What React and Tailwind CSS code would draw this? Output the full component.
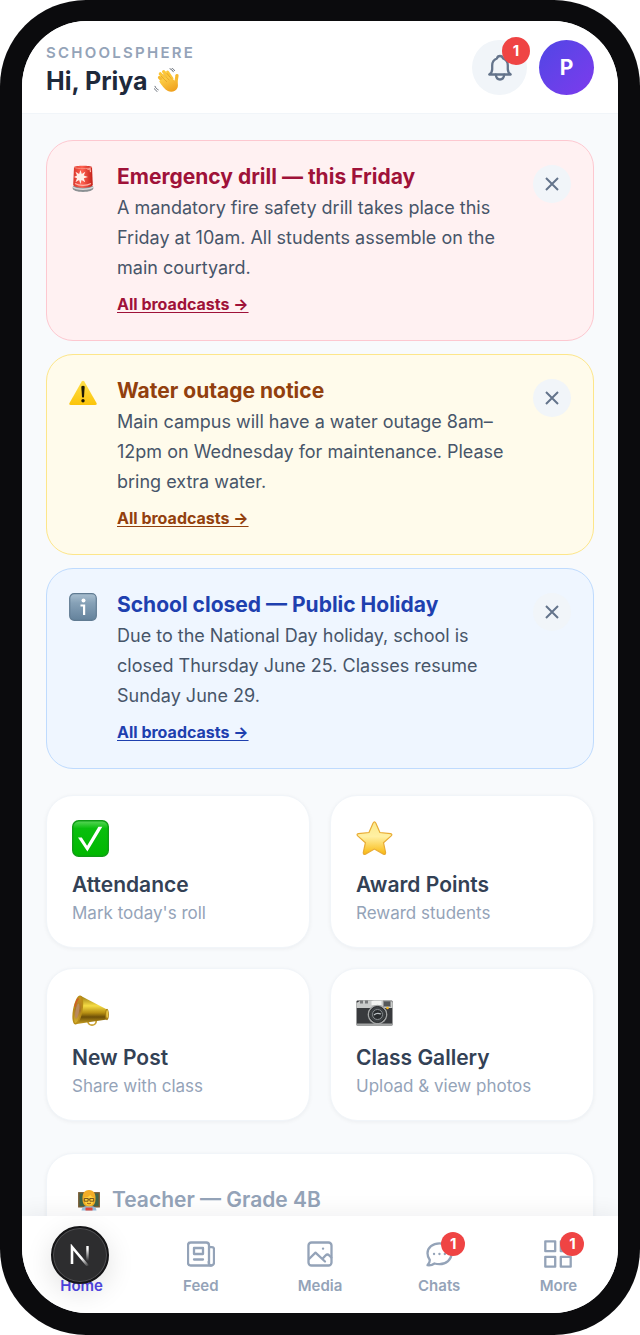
import React, { useState } from 'react'

const broadcasts = [
  {
    id: 'drill',
    title: 'Emergency drill — this Friday',
    body: 'A mandatory fire safety drill takes place this Friday at 10am. All students assemble on the main courtyard.',
    icon: SirenEmoji,
    card: 'bg-[#fff1f2] border-[#fdc8d0]',
    accent: 'text-[#9f1239]'
  },
  {
    id: 'water',
    title: 'Water outage notice',
    body: 'Main campus will have a water outage 8am–12pm on Wednesday for maintenance. Please bring extra water.',
    icon: WarningEmoji,
    card: 'bg-[#fffbeb] border-[#fde68a]',
    accent: 'text-[#92400e]'
  },
  {
    id: 'holiday',
    title: 'School closed — Public Holiday',
    body: 'Due to the National Day holiday, school is closed Thursday June 25. Classes resume Sunday June 29.',
    icon: InfoEmoji,
    card: 'bg-[#eff6ff] border-[#bfdbfe]',
    accent: 'text-[#1e40af]'
  }
]

const actions = [
  { title: 'Attendance', subtitle: "Mark today's roll", icon: CheckEmoji },
  { title: 'Award Points', subtitle: 'Reward students', icon: StarEmoji },
  { title: 'New Post', subtitle: 'Share with class', icon: MegaphoneEmoji },
  { title: 'Class Gallery', subtitle: 'Upload & view photos', icon: CameraEmoji }
]

const tabs = [
  { label: 'Home', icon: HomeIcon, active: true },
  { label: 'Feed', icon: FeedIcon },
  { label: 'Media', icon: MediaIcon },
  { label: 'Chats', icon: ChatIcon, badge: 1 },
  { label: 'More', icon: MoreIcon, badge: 1 }
]

/* Emoji drawings */

function WaveEmoji() {
  return (
    <svg viewBox="0 0 26 26" className="w-[26px] h-[26px]" aria-hidden="true">
      <defs>
        <linearGradient id="wave" x1="0" y1="0" x2="0.6" y2="1">
          <stop offset="0" stopColor="#ffd84f" />
          <stop offset="1" stopColor="#f0a21f" />
        </linearGradient>
      </defs>
      <g strokeLinecap="round" fill="none">
        <path d="M5.5 9.5 12 16" stroke="#f6b92e" strokeWidth="3.2" />
        <path d="M6.3 5.8 13.5 13" stroke="#fbc638" strokeWidth="3.2" />
        <path d="M9.6 3.6 16 11" stroke="#fbc638" strokeWidth="3.2" />
        <path d="M13.6 4 18 10.5" stroke="#fbc638" strokeWidth="3" />
        <path d="M23 7.6 22 14" stroke="#f6b92e" strokeWidth="3.2" />
      </g>
      <path d="M5.2 13.2C7 11.5 15 7.5 17.2 9.2l3.3 3.6 1.4-2.6c1.6 2.2 2.8 6.6 1.6 9.6-1.5 3.8-6.3 5-9.6 3.2-2.9-1.6-6.7-6-8.7-9.8z" fill="url(#wave)" />
      <path d="m7 8.2 6 5.7M9.4 6.2l6 6.1M12.8 5.2l4.5 5.5" stroke="#e09a22" strokeWidth=".7" fill="none" />
      <path d="M16 .8c1.5.6 2.6 1.6 3.3 3M18 .3c1.2.5 1.9 1.2 2.5 2.3M1 18.3c.6 1.6 1.7 2.8 3.2 3.5M.6 20.8c.5 1.2 1.3 2 2.4 2.5" stroke="#555d69" strokeWidth=".9" strokeLinecap="round" fill="none" />
    </svg>
  )
}

function SirenEmoji() {
  return (
    <svg viewBox="0 0 28 28" className="w-7 h-7" aria-hidden="true">
      <defs>
        <linearGradient id="siren" x1="0" x2="1">
          <stop offset="0" stopColor="#d9372c" />
          <stop offset=".45" stopColor="#ff6352" />
          <stop offset="1" stopColor="#c31f18" />
        </linearGradient>
      </defs>
      <path d="M4 21h20l.4 2c0 2.5-4.400 3.900-10.400 3.900S3.600 25.500 3.600 23z" fill="#8b9093" />
      <path d="M4 22c3 2.900 17 2.900 20 0" stroke="#d5d8da" strokeWidth="1.500" fill="none" />
      <path d="M5 2C6.500.200 21.500.200 23 2l.8 18c-2 3.600-17.600 3.600-19.600 0z" fill="url(#siren)" />
      <path d="M5.300 2.400c3 1.600 14.400 1.600 17.400 0" stroke="#f98b7d" fill="none" />
      <path d="m18.500 4.500 2.500-.8.5 3.500M6 18.500c4 2.500 12 2.500 16 0" stroke="#ffb4a8" strokeWidth="1.200" fill="none" />
      <path d="m11.500 5 1.300 4 3.500-2.300-1.500 3.900 4.200 1.300-4.200 1.400 1.400 3.900-3.600-2.200-1.200 4-1.300-4-3.600 2.200 1.500-3.900-3-1.400 3-1.400-1.500-3.800 3.600 2.300z" fill="#fff0e9" />
    </svg>
  )
}

function WarningEmoji() {
  return (
    <svg viewBox="0 0 28 28" className="w-7 h-7" aria-hidden="true">
      <defs>
        <linearGradient id="warn" x1="0" y1="0" x2="0" y2="1">
          <stop offset="0" stopColor="#ffe04a" />
          <stop offset="1" stopColor="#fbc40a" />
        </linearGradient>
      </defs>
      <path d="M12.7 2.6q1.3-1.8 2.6 0L27.5 24q.8 2-1.3 2H1.8q-2.100 0-1.300-2z" fill="url(#warn)" />
      <path d="M12.3 7.500q1.700-1.500 3.400 0l-.7 10.500q-1 1-2 0z" fill="#1d1905" />
      <circle cx="14" cy="21.800" r="1.700" fill="#1d1905" />
    </svg>
  )
}

function InfoEmoji() {
  return (
    <svg viewBox="0 0 28 28" className="w-7 h-7" aria-hidden="true">
      <defs>
        <linearGradient id="info" x1="0" y1="0" x2="0" y2="1">
          <stop offset="0" stopColor="#a9bfd0" />
          <stop offset=".35" stopColor="#86a1b7" />
          <stop offset="1" stopColor="#64829c" />
        </linearGradient>
      </defs>
      <rect x=".7" y=".7" width="26.6" height="26.6" rx="4.5" fill="url(#info)" stroke="#607b92" strokeWidth="1.2" />
      <circle cx="14.5" cy="7.6" r="2" fill="#fff" />
      <path d="M11.500 12.500h3.600V22" stroke="#fff" strokeWidth="2.200" fill="none" />
    </svg>
  )
}

function CheckEmoji() {
  return (
    <svg viewBox="0 0 37 37" className="w-[37px] h-[37px]" aria-hidden="true">
      <defs>
        <linearGradient id="check" x1="0" y1="0" x2="0" y2="1">
          <stop offset="0" stopColor="#5bd65a" />
          <stop offset=".22" stopColor="#09be0d" />
          <stop offset="1" stopColor="#00b800" />
        </linearGradient>
      </defs>
      <rect x=".7" y=".7" width="35.6" height="35.6" rx="6" fill="url(#check)" stroke="#109c16" strokeWidth="1.4" />
      <path d="M6 17.500h3.800l5.300 8.300L26.400 6.700h3.900L15.400 31.500z" fill="#fff" />
    </svg>
  )
}

function StarEmoji() {
  return (
    <svg viewBox="0 0 37 37" className="w-[37px] h-[37px]" aria-hidden="true">
      <defs>
        <linearGradient id="star" x1="0" y1="0" x2="0" y2="1">
          <stop offset="0" stopColor="#fbe98b" />
          <stop offset=".45" stopColor="#fff0a3" />
          <stop offset="1" stopColor="#f9b90f" />
        </linearGradient>
      </defs>
      <path
        d="M17 3.200q1.500-2.600 2.900 0l4 9.300 10.600 1.100q2.300.6.7 2.300l-7.700 6.800 2.100 9.900q.1 2.500-2.200 1.500l-9-5-8.900 5q-2.300 1-2.200-1.500l2.100-9.900-7.700-6.800q-1.600-1.700.7-2.300L13 12.500z"
        fill="url(#star)"
        stroke="#e9ac35"
        strokeWidth="1.2"
      />
    </svg>
  )
}

function MegaphoneEmoji() {
  return (
    <svg viewBox="0 0 37 37" className="w-[37px] h-[37px]" aria-hidden="true">
      <defs>
        <linearGradient id="horn" x1="0" y1="0" x2="0" y2="1">
          <stop offset="0" stopColor="#9b7a12" />
          <stop offset=".35" stopColor="#f5dc45" />
          <stop offset=".6" stopColor="#b78f12" />
          <stop offset=".75" stopColor="#6d4f08" />
          <stop offset="1" stopColor="#c9a020" />
        </linearGradient>
        <linearGradient id="mouth" x1="0" y1="0" x2="0" y2="1">
          <stop offset="0" stopColor="#c9971d" />
          <stop offset=".5" stopColor="#a87428" />
          <stop offset="1" stopColor="#d8b62c" />
        </linearGradient>
      </defs>
      <circle cx="20" cy="28" r="4.2" stroke="#c99f2c" strokeWidth="1.7" fill="none" />
      <path d="M9 3 35 16.500v10L5 31z" fill="url(#horn)" />
      <ellipse cx="35" cy="21.5" rx="1.9" ry="5.8" fill="#a77e12" />
      <ellipse cx="35.2" cy="21" rx="1" ry="4" fill="#e8c646" />
      <ellipse cx="5.8" cy="17" rx="4" ry="14" transform="rotate(10 5.800 17)" fill="url(#mouth)" stroke="#b98d18" strokeWidth="1.6" />
      <ellipse cx="5.3" cy="18" rx="1.800" ry="7.500" transform="rotate(10 5.300 18)" fill="#b98a5c" />
      <path d="M3 14c.6-4 2-7 3.500-8.500" stroke="#d4552a" strokeWidth="1.2" fill="none" />
    </svg>
  )
}

function CameraEmoji() {
  return (
    <svg viewBox="0 0 37 37" className="w-[37px] h-[37px]" aria-hidden="true">
      <rect x=".5" y="7.5" width="36" height="25" rx="1" fill="#383a3d" />
      <path d="M.5 15V10l4-2.500h11L18 7h17l1.500 3v5z" fill="#c9cbca" />
      <path d="M4 7.500h3v3H4zM9 7.500h3v3H9z" fill="#77797a" />
      <rect x="15.5" y="8" width="10" height="4" fill="#f2f3f1" />
      <rect x="27.5" y="8" width="7" height="5.5" fill="#55585a" stroke="#8e9090" />
      <rect x=".5" y="30.500" width="36" height="2" fill="#a4a6a6" />
      <circle cx="21.5" cy="21.500" r="9.8" fill="#a3a5a5" />
      <circle cx="21.5" cy="21.500" r="8" fill="#3e4245" stroke="#25282a" />
      <circle cx="21.5" cy="21.500" r="5" fill="#292c2f" stroke="#898e91" />
      <path d="M18 22c2-2 4.500-2 7-1" stroke="#bcc2c5" strokeWidth="1.3" fill="none" />
      <circle cx="31.5" cy="15" r="1.3" fill="#f5b922" />
    </svg>
  )
}

function TeacherEmoji() {
  return (
    <svg viewBox="0 0 22 22" className="w-[22px] h-[22px]" aria-hidden="true">
      <rect x=".8" y="3.8" width="20.4" height="14" fill="#3e654b" stroke="#795b32" strokeWidth="1.4" />
      <path d="M3.500 21.500c.4-3.600 2.800-4.500 7.500-4.500s7.100.9 7.500 4.500z" fill="#9ac0df" />
      <path d="M7.500 18.500h7v3h-7z" fill="#e44a3f" />
      <path d="M4.800 13C3.500 5 6 1 11 1s7.500 4 6.200 12c-.8 3-2.500 4.500-6.200 4.500S5.600 16 4.800 13z" fill="#f3ad27" />
      <path d="M6.300 8.500c3.200 0 5-1.200 6-2.700 1 1.700 2.200 2.500 3.500 2.700 0 5-1.500 8-4.800 8s-4.700-3-4.700-8z" fill="#ffd13d" />
      <path d="M6.300 9.500h3.800v2.700H6.300zM11.900 9.500h3.800v2.700h-3.800zM10.100 10.200h1.800" stroke="#6b4a1d" strokeWidth=".9" fill="none" />
      <path d="M9 14.200q2 1.300 4 0" stroke="#9a551c" strokeWidth=".9" fill="none" />
    </svg>
  )
}

/* Line icons */

function Icon({ children }) {
  return (
    <svg
      viewBox="0 0 28 28"
      className="w-7 h-7"
      fill="none"
      stroke="currentColor"
      strokeWidth="2.3"
      strokeLinecap="round"
      strokeLinejoin="round"
      aria-hidden="true"
    >
      {children}
    </svg>
  )
}

function BellIcon() {
  return (
    <Icon>
      <path d="M3.300 20.500h21.400c-2-1.500-2.900-3-2.900-5.300v-3.700c0-3.500-1.900-6-4.700-7-.4-1.600-1.600-2.500-3.100-2.500s-2.700.9-3.100 2.500c-2.800 1-4.700 3.500-4.700 7v3.700c0 2.300-.9 3.800-2.900 5.300z" />
      <path d="M9.800 20.700c.3 3.100 1.900 4.800 4.200 4.800s3.900-1.700 4.200-4.800" />
    </Icon>
  )
}

function HomeIcon() {
  return (
    <Icon>
      <path d="m2.500 13.500 11.500-11 11.500 11M5.500 11v14.500h6V18h5v7.500h6V11" />
    </Icon>
  )
}

function FeedIcon() {
  return (
    <Icon>
      <path d="M22 23.500V5.200A2.700 2.700 0 0 0 19.300 2.500H3.700A2.700 2.700 0 0 0 1 5.200v17.600a2.700 2.700 0 0 0 2.700 2.700H24a3 3 0 0 0 3-3V9.200a2 2 0 0 0-2-2h-3" />
      <path d="M21.700 21.800c0 2.200.8 3.700 2.300 3.700M7 8h9v6H7zM7 19.500h9" />
    </Icon>
  )
}

function MediaIcon() {
  return (
    <Icon>
      <rect x="2.5" y="2.5" width="23" height="23" rx="3" />
      <path d="m3 19 6.500-6.300L19 21.500M16.500 18.800l3-3.300c1.200-1.200 2.600-1.200 3.800 0l2 2" />
      <path d="M17 8.700h.1" />
    </Icon>
  )
}

function ChatIcon() {
  return (
    <Icon>
      <path d="M14.500 3.300c-6.800 0-12 4.400-12 10 0 2.900 1 5 2.300 6.700 0 2.300-.8 4-2.300 5.200 2.600.3 5-.2 7-1.700 1.500.4 3.200.6 5 .6 6.800 0 12-4.600 12-10.600s-5.200-10.200-12-10.200z" />
      <path d="M9 14h.1M14.400 14h.1M19.800 14h.1" />
    </Icon>
  )
}

function MoreIcon() {
  return (
    <Icon>
      <path d="M1.300 1.300h9.900v9.900H1.300zM16.800 1.300h9.900v9.900h-9.900zM1.300 16.800h9.900v9.900H1.300zM16.800 16.800h9.900v9.900h-9.900z" />
    </Icon>
  )
}

function CloseIcon() {
  return (
    <svg viewBox="0 0 14 14" className="w-[14px] h-[14px]" fill="none" stroke="currentColor" strokeWidth="2" aria-hidden="true">
      <path d="m1 1 12 12M13 1 1 13" />
    </svg>
  )
}

function DevBadge() {
  return (
    <button
      aria-label="Open developer tools"
      className="absolute left-[29px] bottom-[29px] w-[58px] h-[58px] rounded-full bg-[#2d2d2f] border-2 border-[#151517] ring-1 ring-inset ring-[#505053] flex items-center justify-center shadow-[0_8px_28px_rgba(0,0,0,0.12)]"
    >
      <svg viewBox="0 0 20 22" className="w-5 h-[22px]" fill="none" aria-hidden="true">
        <defs>
          <linearGradient id="stem" x1="0" y1="5" x2="0" y2="17" gradientUnits="userSpaceOnUse">
            <stop stopColor="#fff" />
            <stop offset="1" stopColor="#fff" stopOpacity="0" />
          </linearGradient>
          <linearGradient id="slash" x1="12" y1="14" x2="19" y2="22" gradientUnits="userSpaceOnUse">
            <stop stopColor="#fff" />
            <stop offset="1" stopColor="#fff" stopOpacity="0" />
          </linearGradient>
        </defs>
        <path d="M2 20V3l16 19" stroke="url(#slash)" strokeWidth="2.6" />
        <path d="M17.500 2v15" stroke="url(#stem)" strokeWidth="2.4" />
      </svg>
    </button>
  )
}

function BroadcastCard({ item, onDismiss }) {
  const Emoji = item.icon
  return (
    <article className={`flex items-start rounded-[27px] border px-[22px] pt-[22px] pb-6 ${item.card}`}>
      <div className="pt-0.5 mr-5">
        <Emoji />
      </div>
      <div className="flex-1 min-w-0">
        <h2 className={`text-[21px] leading-7 font-bold ${item.accent}`}>{item.title}</h2>
        <p className="mt-0.5 text-lg leading-[30px] text-[#475569]">{item.body}</p>
        <a href="#broadcasts" className={`mt-2.5 block w-fit text-[16px] leading-[23px] font-bold underline underline-offset-2 ${item.accent}`}>
          All broadcasts →
        </a>
      </div>
      <button
        onClick={onDismiss}
        aria-label={`Dismiss ${item.title}`}
        className="mt-0.5 ml-5 w-[38px] h-[38px] shrink-0 rounded-full bg-[#f1f5f9] text-[#64748b] flex items-center justify-center"
      >
        <CloseIcon />
      </button>
    </article>
  )
}

const App = () => {
  const [dismissed, setDismissed] = useState([])
  const visible = broadcasts.filter((item) => !dismissed.includes(item.id))

  return (
    <div className="h-screen bg-white font-['Inter','Liberation_Sans',sans-serif]">
      <div className="h-full rounded-[86px] bg-[#0b0b0d] px-[22px] pt-[21px] pb-[22px]">
        <div className="relative h-full rounded-[65px] overflow-hidden bg-[#f8fafc] flex flex-col">
          {/* Header */}
          <header className="flex items-start justify-between px-6 pt-[19px] pb-[17px] bg-white border-b border-[#f1f5f9]">
            <div>
              <p className="text-[15px] leading-[26px] font-semibold tracking-[0.15em] text-[#94a3b8]">SCHOOLSPHERE</p>
              <h1 className="flex items-center gap-1.5 text-[25px] leading-[30px] font-bold text-[#1e293b]">
                Hi, Priya <WaveEmoji />
              </h1>
            </div>
            <div className="flex items-center gap-3">
              <button aria-label="Notifications" className="relative w-[55px] h-[55px] rounded-full bg-[#f1f5f9] text-[#64748b] flex items-center justify-center">
                <BellIcon />
                <span className="absolute -top-[3px] -right-[3px] w-7 h-7 rounded-full bg-[#ef4444] text-white text-[15px] leading-7 font-bold text-center">1</span>
              </button>
              <button aria-label="Profile" className="w-[55px] h-[55px] rounded-full bg-gradient-to-br from-[#4f46e5] to-[#7c3aed] text-white text-[21px] font-bold">
                P
              </button>
            </div>
          </header>

          <main className="flex-1 min-h-0 overflow-y-auto [scrollbar-width:none] px-6 pt-[26px]">
            {/* Broadcasts */}
            <section className="flex flex-col gap-[13px]">
              {visible.map((item) => (
                <BroadcastCard key={item.id} item={item} onDismiss={() => setDismissed([...dismissed, item.id])} />
              ))}
            </section>

            {/* Quick actions */}
            <section className="mt-[26px] grid grid-cols-2 gap-5">
              {actions.map(({ title, subtitle, icon: Emoji }) => (
                <a
                  key={title}
                  href="#action"
                  className="rounded-[27px] bg-white border border-[#f1f5f9] px-[25px] pt-6 pb-[22px] shadow-[0_1px_4px_rgba(15,23,42,0.05)]"
                >
                  <Emoji />
                  <h3 className="mt-3.5 text-[21px] leading-7 font-semibold text-[#334155]">{title}</h3>
                  <p className="mt-0.5 text-[17px] leading-6 text-[#94a3b8]">{subtitle}</p>
                </a>
              ))}
            </section>

            {/* Class summary */}
            <section className="mt-8 mb-6 min-h-40 rounded-[27px] bg-white border border-[#f1f5f9] px-[31px] pt-8 shadow-[0_1px_4px_rgba(15,23,42,0.05)]">
              <h2 className="flex items-center gap-3 text-[21px] leading-7 font-semibold text-[#94a3b8]">
                <TeacherEmoji />
                Teacher — Grade 4B
              </h2>
            </section>
          </main>

          {/* Bottom tabs */}
          <nav className="relative grid grid-cols-5 bg-white pt-6 pb-[17px] shadow-[0_-4px_20px_rgba(15,23,42,0.06)]">
            {tabs.map(({ label, icon: TabIcon, badge, active }) => (
              <a
                key={label}
                href="#tab"
                className={`flex flex-col items-center gap-2 text-[15px] leading-5 font-semibold ${active ? 'text-[#4f46e5]' : 'text-[#94a3b8]'}`}
              >
                <span className="relative">
                  <TabIcon />
                  {badge && (
                    <span className="absolute -top-2 -right-3 w-6 h-6 rounded-full bg-[#ef4444] text-white text-[15px] leading-6 font-bold text-center">{badge}</span>
                  )}
                </span>
                {label}
              </a>
            ))}
          </nav>
          <DevBadge />
        </div>
      </div>
    </div>
  )
}

export default App
